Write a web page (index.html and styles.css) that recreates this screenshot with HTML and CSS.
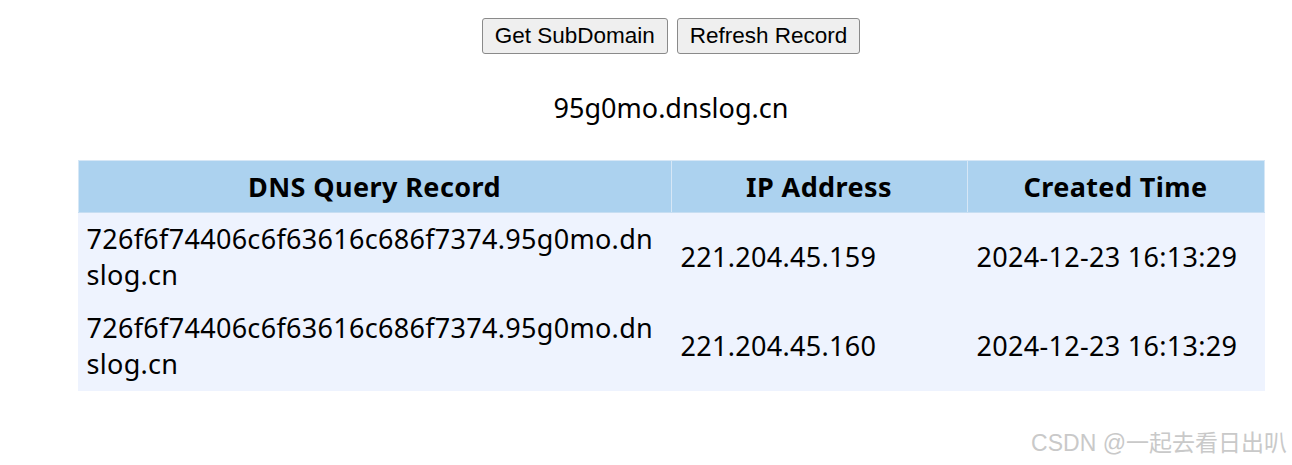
FILE: index.html
```html
<!DOCTYPE html>
<html>
<head>
<meta charset="utf-8">
<link rel="stylesheet" href="styles.css">
</head>
<body>
<div class="page">
  <div class="actions">
    <button class="btn">Get SubDomain</button>
    <button class="btn">Refresh Record</button>
  </div>
  <div class="domain">95g0mo.dnslog.cn</div>
  <table class="records">
    <colgroup>
      <col class="c1"><col class="c2"><col class="c3">
    </colgroup>
    <thead>
      <tr><th>DNS Query Record</th><th>IP Address</th><th>Created Time</th></tr>
    </thead>
    <tbody>
      <tr><td class="query">726f6f74406c6f63616c686f7374.95g0mo.dnslog.cn</td><td>221.204.45.159</td><td>2024-12-23 16:13:29</td></tr>
      <tr><td class="query">726f6f74406c6f63616c686f7374.95g0mo.dnslog.cn</td><td>221.204.45.160</td><td>2024-12-23 16:13:29</td></tr>
    </tbody>
  </table>
</div>
<div class="watermark">CSDN @一起去看日出叭</div>
</body>
</html>
```
FILE: styles.css
```css
html, body {
  margin: 0;
  padding: 0;
  background: #ffffff;
}
body {
  font-family: "Noto Sans", "Open Sans", sans-serif;
  color: #000;
}
.page {
  width: 1186px;
  margin-left: 78px;
  padding-top: 18px;
  display: flex;
  flex-direction: column;
  align-items: center;
}
.actions {
  display: flex;
  gap: 9px;
}
.btn {
  font-family: "Liberation Sans", Arial, sans-serif;
  font-size: 22.5px;
  line-height: 26px;
  height: 36px;
  padding: 0 12px;
  background: #efefef;
  border: 1px solid #8a8a8a;
  border-radius: 3px;
  color: #000;
}
.domain {
  margin-top: 37px;
  font-size: 27px;
  line-height: 34px;
}
.records {
  margin-top: 35px;
  width: 1186px;
  border-collapse: collapse;
  table-layout: fixed;
}
.c1 { width: 593px; }
.c2 { width: 296px; }
.c3 { width: 297px; }
.records th, .records td {
  font-size: 27px;
  line-height: 36px;
}
.records th {
  background: #acd2ef;
  font-weight: 700;
  height: 51px;
  padding: 0 8px;
  text-align: center;
  letter-spacing: 0.4px;
  border: 1px solid #d6e7f6;
  border-bottom-color: #c7def2;
}
.records td {
  background: #eef3fe;
  border: 1px solid #eef3fe;
  padding: 8px 8px;
  letter-spacing: 0.3px;
  word-break: break-all;
  vertical-align: middle;
  text-align: left;
}
.records td.query {
  padding-right: 14px;
}
.records td + td {
  padding-left: 9px;
}
.watermark {
  position: absolute;
  right: 5px;
  top: 428px;
  font-family: "Liberation Sans", Arial, "Noto Sans CJK SC", sans-serif;
  font-size: 23px;
  line-height: 30px;
  color: #c9c9c9;
}
```
